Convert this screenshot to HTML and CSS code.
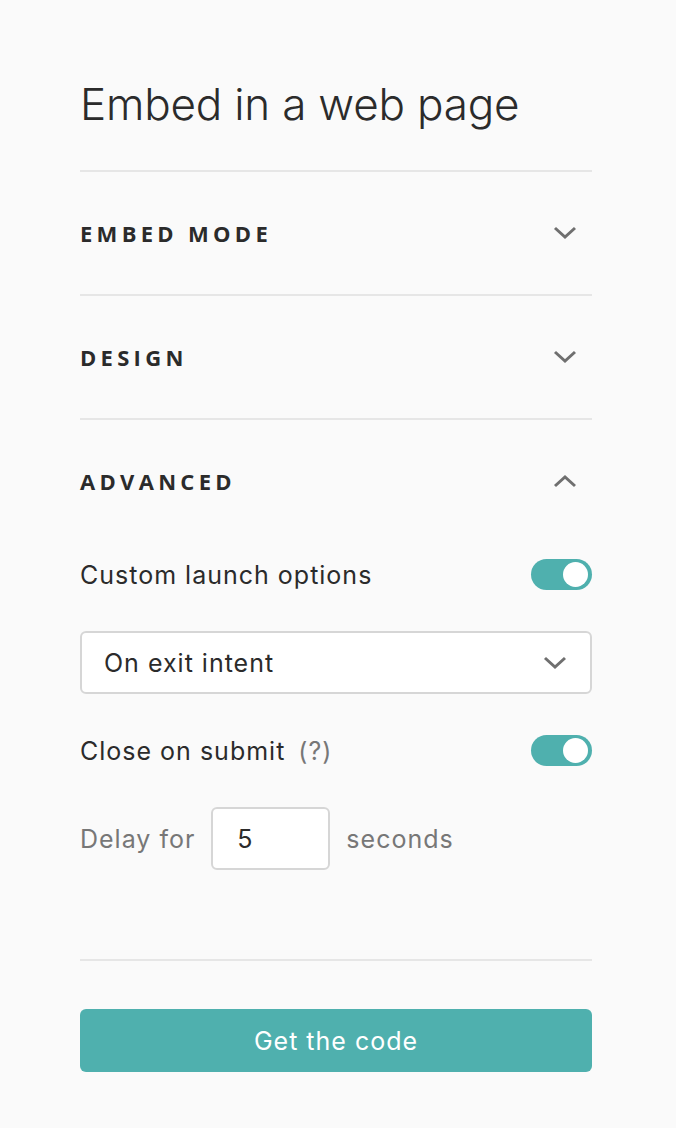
FILE: index.html
```html
<!DOCTYPE html>
<html lang="en">
<head>
  <meta charset="UTF-8">
  <title>Embed in a web page</title>
  <link rel="stylesheet" href="styles.css">
</head>
<body>

  <div class="panel">
    <h1 class="title">Embed in a web page</h1>

    <div class="section">
      <div class="section-head">
        <span>Embed mode</span>
        <svg class="chevron" width="24" height="14" viewBox="0 0 24 14"><path d="M2 2 L12 11 L22 2" /></svg>
      </div>
    </div>

    <div class="section">
      <div class="section-head">
        <span>Design</span>
        <svg class="chevron" width="24" height="14" viewBox="0 0 24 14"><path d="M2 2 L12 11 L22 2" /></svg>
      </div>
    </div>

    <div class="section">
      <div class="section-head">
        <span>Advanced</span>
        <svg class="chevron" width="24" height="14" viewBox="0 0 24 14"><path d="M2 12 L12 3 L22 12" /></svg>
      </div>

      <div class="section-body">
        <div class="row">
          <span>Custom launch options</span>
          <div class="toggle on"><div class="knob"></div></div>
        </div>

        <div class="select">
          <span>On exit intent</span>
          <svg class="chevron" width="24" height="14" viewBox="0 0 24 14"><path d="M2 2 L12 11 L22 2" /></svg>
        </div>

        <div class="row">
          <span>Close on submit <span class="hint">(?)</span></span>
          <div class="toggle on"><div class="knob"></div></div>
        </div>

        <div class="delay">
          <span>Delay for</span>
          <input type="text" value="5" />
          <span>seconds</span>
        </div>
      </div>
    </div>

    <div class="footer">
      <button>Get the code</button>
    </div>
  </div>

</body>
</html>
```

FILE: styles.css
```css
body {
  margin: 0;
  background: #fafafa;
  font-family: Inter, "Liberation Sans", sans-serif;
  color: #2b2b2b;
}

.panel {
  width: 512px;
  margin-left: 80px;
  padding-top: 74px;
}

.title {
  margin: 0 0 36px 0;
  font-size: 44px;
  font-weight: 300;
  line-height: 60px;
  letter-spacing: -0.2px;
}

.section {
  border-top: 2px solid #e6e6e6;
}

.section-head {
  height: 122px;
  display: flex;
  align-items: center;
  justify-content: space-between;
  font-family: "Open Sans", sans-serif;
  font-size: 22px;
  font-weight: 700;
  letter-spacing: 4.3px;
  text-transform: uppercase;
  color: #2b2b2b;
}

.chevron {
  margin-right: 15px;
  fill: none;
  stroke: #6f6f6f;
  stroke-width: 3;
}

.section-body {
  padding: 17px 0 89px 0;
  display: flex;
  flex-direction: column;
  gap: 41px;
}

.row {
  display: flex;
  align-items: center;
  justify-content: space-between;
  font-size: 25px;
  letter-spacing: 1px;
}

.hint {
  color: #777;
  margin-left: 5px;
}

.toggle {
  width: 61px;
  height: 31px;
  border-radius: 16px;
  background: #ccc;
  position: relative;
}

.toggle.on {
  background: #4fb0ae;
}

.knob {
  position: absolute;
  top: 3px;
  right: 4px;
  width: 25px;
  height: 25px;
  border-radius: 50%;
  background: white;
}

.select {
  height: 59px;
  border: 2px solid #d6d6d6;
  border-radius: 6px;
  background: white;
  display: flex;
  align-items: center;
  justify-content: space-between;
  padding-left: 22px;
  padding-right: 8px;
  font-size: 25px;
  letter-spacing: 1px;
}

.delay {
  display: flex;
  align-items: center;
  gap: 16px;
  font-size: 25px;
  letter-spacing: 1px;
  color: #777;
}

.delay input {
  width: 91px;
  height: 59px;
  box-sizing: content-box;
  padding: 0 0 0 24px;
  border: 2px solid #d6d6d6;
  border-radius: 6px;
  background: white;
  font-family: Inter, "Liberation Sans", sans-serif;
  font-size: 25px;
  color: #2b2b2b;
}

.footer {
  border-top: 2px solid #e6e6e6;
  padding-top: 48px;
}

button {
  width: 512px;
  height: 63px;
  border: none;
  border-radius: 6px;
  background: #4fb0ae;
  color: white;
  font-family: Inter, "Liberation Sans", sans-serif;
  font-size: 25px;
  letter-spacing: 1px;
  cursor: pointer;
}
```
